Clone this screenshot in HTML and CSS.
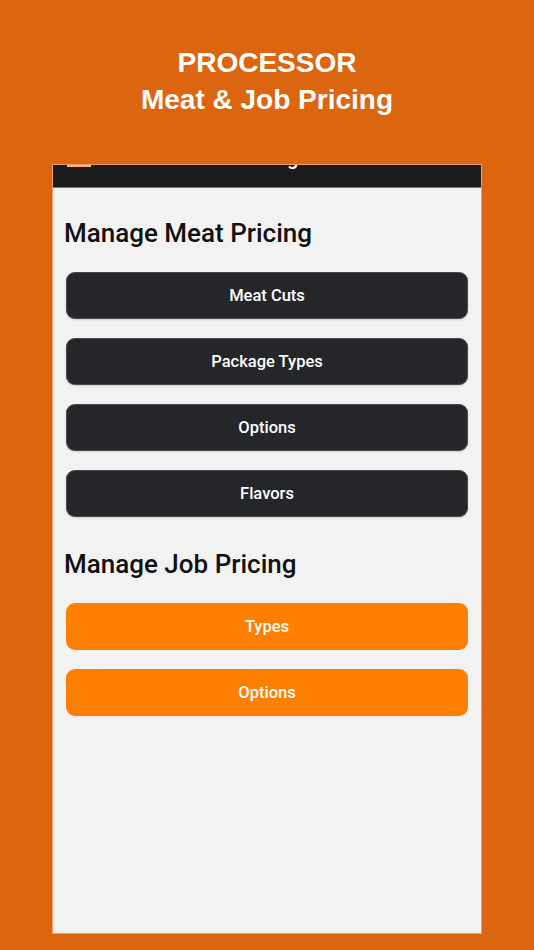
FILE: index.html
```html
<!DOCTYPE html>
<html lang="en">
<head>
    <meta charset="UTF-8">
    <meta name="viewport" content="width=device-width, initial-scale=1.0">
    <title>Processor - Meat &amp; Job Pricing</title>
    <link rel="stylesheet" href="styles.css">
</head>
<body>
    <header class="promo">
        <h1>PROCESSOR<br>Meat &amp; Job Pricing</h1>
    </header>

    <div class="phone">
        <!-- app bar is cut off at the top of the frame -->
        <div class="appbar">
            <div class="appbar-inner">
                <span class="menu-icon"><i></i><i></i><i></i></span>
                <span class="appbar-title">Pricing</span>
            </div>
        </div>

        <div class="screen">
            <section>
                <h2>Manage Meat Pricing</h2>
                <button class="btn btn-dark">Meat Cuts</button>
                <button class="btn btn-dark">Package Types</button>
                <button class="btn btn-dark">Options</button>
                <button class="btn btn-dark">Flavors</button>
            </section>

            <section>
                <h2>Manage Job Pricing</h2>
                <button class="btn btn-orange">Types</button>
                <button class="btn btn-orange">Options</button>
            </section>
        </div>
    </div>
</body>
</html>
```

FILE: styles.css
```css
body {
    font-family: Roboto, "Noto Sans", sans-serif;
    margin: 0;
    padding: 0;
    background-color: #dc6510;
    height: 950px;
    overflow: hidden;
}
.promo {
    text-align: center;
    padding-top: 44px;
    height: 165px;
    box-sizing: border-box;
}
.promo h1 {
    margin: 0;
    font-family: "Liberation Sans", Arial, sans-serif;
    font-size: 28px;
    line-height: 37px;
    font-weight: bold;
    color: white;
}
.phone {
    width: 428px;
    height: 768px;
    margin: 0 auto;
    background: #f2f2f2;
    box-shadow: 0 0 0 1px rgba(255, 220, 190, 0.5);
}
.appbar {
    height: 23px;
    overflow: hidden;
    background: #1c1c1c;
    border-bottom: 1px solid #777;
    box-sizing: border-box;
}
.appbar-inner {
    height: 56px;
    margin-top: -33px;
    display: flex;
    align-items: center;
    justify-content: center;
    position: relative;
}
.menu-icon {
    position: absolute;
    left: 14px;
    top: 19px;
    width: 24px;
    display: flex;
    flex-direction: column;
    gap: 5px;
}
.menu-icon i {
    display: block;
    height: 2px;
    background: #f0b58a;
}
.appbar-title {
    color: white;
    font-size: 20px;
    font-weight: 500;
    margin-top: -4px;
}
.screen {
    padding: 25px 13px 0;
}
section {
    display: flex;
    flex-direction: column;
    gap: 19px;
    margin-bottom: 27px;
}
h2 {
    font-size: 26px;
    font-weight: 500;
    color: #111;
    margin: 0 0 0 -2px;
    line-height: 40px;
}
.btn {
    height: 47px;
    border-radius: 9px;
    border: none;
    font-family: Roboto, "Noto Sans", sans-serif;
    font-size: 16.5px;
    font-weight: 500;
    color: white;
    cursor: pointer;
}
.btn-dark {
    background: #25262a;
    box-shadow: 0 0 0 1px rgba(120, 120, 120, 0.45) inset, 0 1px 2px rgba(0, 0, 0, 0.15);
}
.btn-orange {
    background: #ff8000;
}
```
